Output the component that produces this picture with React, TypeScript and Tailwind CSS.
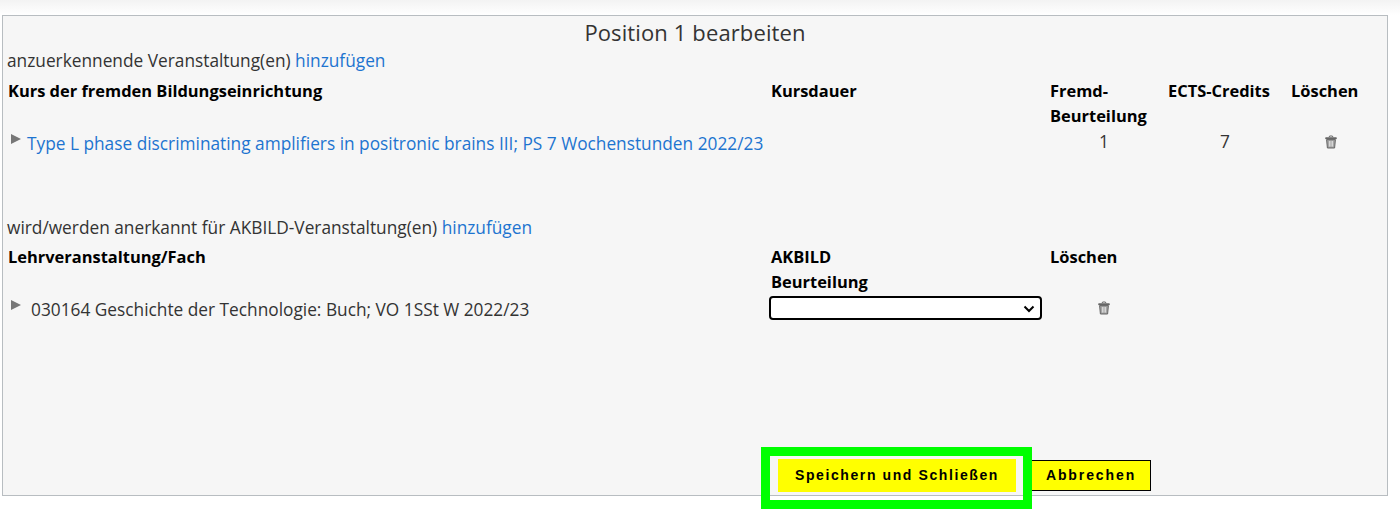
import React from "react";

const font = { fontFamily: '"Open Sans", sans-serif' };

const TrashIcon = () => (
  <svg width="14" height="14" viewBox="0 0 14 14" className="block">
    <path d="M5 2.2 L5.6 1 H8.4 L9 2.2" fill="none" stroke="#666" strokeWidth="1" />
    <rect x="1.2" y="2.2" width="11.6" height="2" rx="0.8" fill="#666" />
    <path d="M2.6 4.6 H11.4 L10.6 13 H3.4 Z" fill="#a0a0a0" stroke="#666" strokeWidth="1" />
    <path d="M5.4 6 V11.6 M7 6 V11.6 M8.6 6 V11.6" stroke="#ececec" strokeWidth="0.8" />
  </svg>
);

const Arrow = () => (
  <span className="mt-[6px] mr-[6px] ml-[3px] h-0 w-0 shrink-0 border-y-[5px] border-l-[10px] border-y-transparent border-l-[#777777]" />
);

const Link = ({ children }: { children: React.ReactNode }) => (
  <a href="#" className="text-[#1d74d0]">
    {children}
  </a>
);

const Head = ({ children }: { children: React.ReactNode }) => (
  <b className="text-[16.45px] font-bold text-black">{children}</b>
);

export default function App() {
  return (
    <div className="h-[519px] w-[1400px] overflow-hidden bg-white text-[17.3px] leading-[25px] text-[#333333] font-['Open_Sans',sans-serif]">
      <div className="h-[15px] bg-gradient-to-b from-[#f3f3f3] to-white" />
      <div className="ml-[2px] flex h-[481px] w-[1386px] flex-col border border-[#b8bdc1] bg-[#f6f6f6] p-[1px]">
        <h1 className="text-center text-[22px] leading-[30px] tracking-[0.12px] text-[#333333]">
          Position 1 bearbeiten
        </h1>
        <p className="mt-[1px] ml-[3px] leading-[25px]">
          anzuerkennende Veranstaltung(en) <Link>hinzufügen</Link>
        </p>

        <div className="mt-[5px] grid grid-cols-[763px_279px_118px_123px_1fr] pl-[4px]">
          <Head>Kurs der fremden Bildungseinrichtung</Head>
          <Head>Kursdauer</Head>
          <Head>
            Fremd-
            <br />
            Beurteilung
          </Head>
          <Head>ECTS-Credits</Head>
          <Head>Löschen</Head>

          <div className="col-span-2 flex h-[25px] whitespace-nowrap">
            <Arrow />
            <span className="pt-[3px]">
              <Link>Type L phase discriminating amplifiers in positronic brains III; PS 7 Wochenstunden 2022/23</Link>
            </span>
          </div>
          <div className="h-[25px] pt-[1px] pr-[10px] text-center">1</div>
          <div className="h-[25px] pt-[1px] pr-[9px] text-center">7</div>
          <div className="flex h-[25px] pt-[7px] pl-[33px]">
            <TrashIcon />
          </div>
        </div>

        <p className="mt-[62px] ml-[3px]">
          wird/werden anerkannt für AKBILD-Veranstaltung(en) <Link>hinzufügen</Link>
        </p>

        <div className="mt-[4px] grid grid-cols-[763px_279px_1fr] pl-[4px]">
          <Head>Lehrveranstaltung/Fach</Head>
          <Head>
            AKBILD
            <br />
            Beurteilung
          </Head>
          <Head>Löschen</Head>

          <div className="flex h-[27px]">
            <Arrow />
            <span className="ml-[4px] pt-[3px]">030164 Geschichte der Technologie: Buch; VO 1SSt W 2022/23</span>
          </div>
          <div className="relative">
            <select
              style={font}
              className="mt-[2px] -ml-[2px] block h-[24px] w-[273px] appearance-none rounded-[4px] border-2 border-black bg-white"
            />
            <svg
              width="12"
              height="8"
              viewBox="0 0 12 8"
              className="pointer-events-none absolute top-[11px] left-[252px]"
            >
              <path d="M1.5 1.5 L6 6 L10.5 1.5" fill="none" stroke="#000" strokeWidth="2" />
            </svg>
          </div>
          <div className="flex pt-[7px] pl-[47px]">
            <TrashIcon />
          </div>
        </div>

        <div className="mt-auto mb-[2px] ml-[774px] flex items-start">
          <div className="relative">
            <button className="h-[33px] w-[238px] bg-[#ffff00] text-[14px] font-bold tracking-[1.6px] text-black font-['Liberation_Sans',sans-serif]">
              Speichern und Schließen
            </button>
            <div className="pointer-events-none absolute -top-[12px] -right-[16px] -bottom-[17px] -left-[17px] border-[9px] border-[#00ff00]" />
          </div>
          <button className="mt-[1px] ml-[15px] h-[31px] w-[120px] border border-black bg-[#ffff00] text-[14px] font-bold tracking-[1.9px] text-black font-['Liberation_Sans',sans-serif]">
            Abbrechen
          </button>
        </div>
      </div>
    </div>
  );
}
